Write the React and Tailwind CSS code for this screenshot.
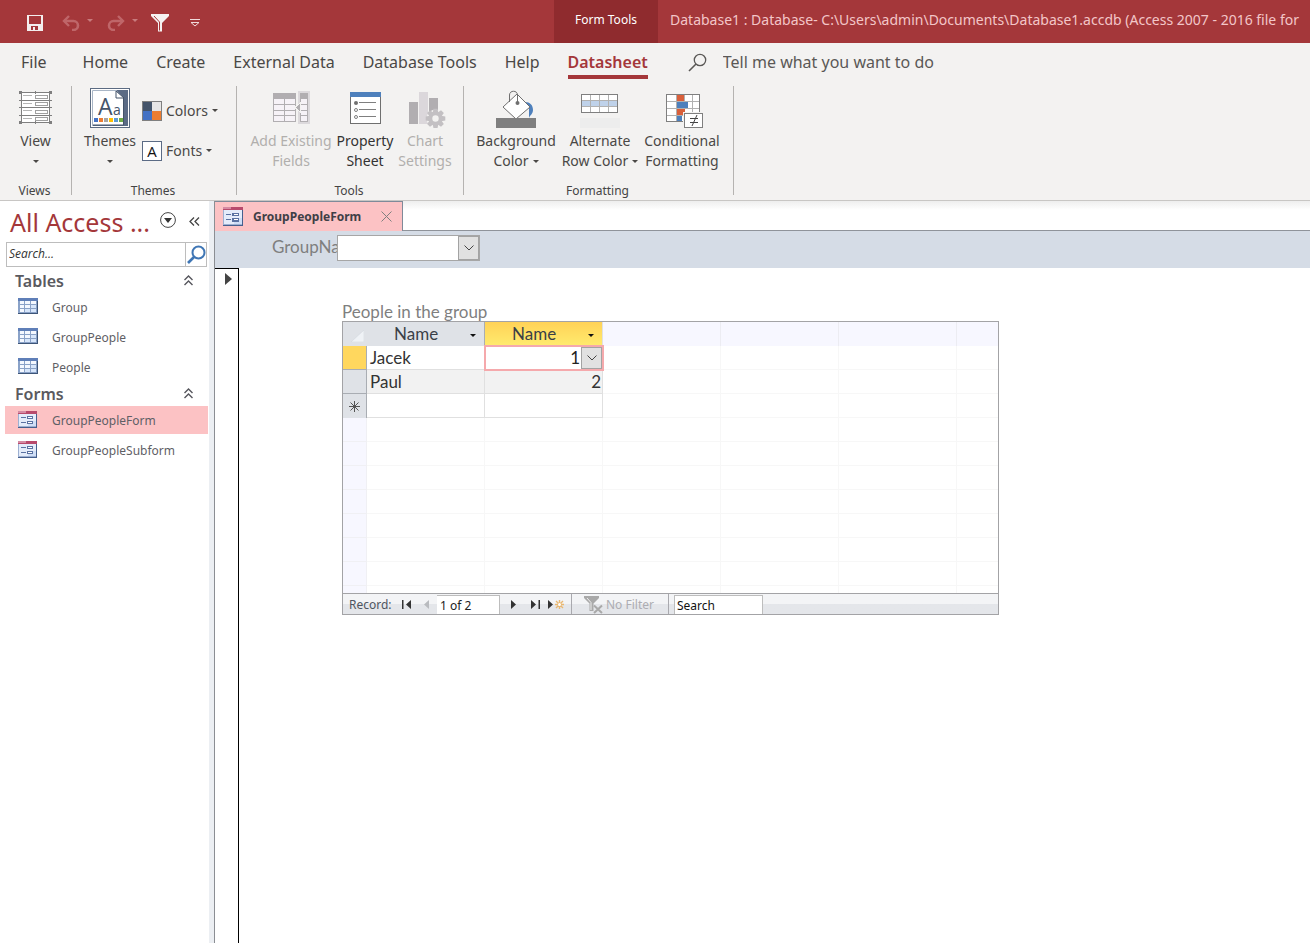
import React, { useState } from "react";

function Caret({ className = "" }) {
  return (
    <svg className={"inline-block shrink-0 " + className} width="6" height="3" viewBox="0 0 6 3" aria-hidden="true">
      <path d="M0 0h6L3 3z" fill="currentColor" />
    </svg>
  );
}

function SaveIcon() {
  return (
    <svg width="16" height="16" viewBox="0 0 16 16" shapeRendering="crispEdges" aria-hidden="true">
      <path fill="#f3eeee" fillRule="evenodd" d="M0 0h16v16H0zM2 1v8h12V1zM4 11v4h2v-3h2v3h3v-4z" />
    </svg>
  );
}

function UndoIcon({ flip = false }) {
  return (
    <svg className={flip ? "-scale-x-100" : ""} width="18" height="16" viewBox="0 0 18 16" fill="none" stroke="#bf6669" aria-hidden="true">
      <path d="M2 6h9.500a4.500 4.500 0 0 1 0 9h-1.500" strokeWidth="2.600" />
      <path d="M7 1 2 6l5 5" strokeWidth="2.400" />
    </svg>
  );
}

function FunnelIcon() {
  return (
    <svg width="18" height="18" viewBox="0 0 18 18" aria-hidden="true">
      <path d="M0 0h18v2l-7 7v8.500H7V9L0 2z" fill="#f6f1f1" />
      <path d="M3 2l5.500 6v8.500" fill="none" stroke="#a4373a" strokeWidth="1" />
    </svg>
  );
}

function CustomizeIcon() {
  return (
    <svg width="10" height="8" viewBox="0 0 10 8" fill="none" stroke="#f0dada" aria-hidden="true">
      <path d="M0 .5h10M1 3.500h8L5 7z" />
    </svg>
  );
}

function SearchGlyph() {
  return (
    <svg width="19" height="19" viewBox="0 0 19 19" fill="none" stroke="#5a5856" strokeWidth="1.300" aria-hidden="true">
      <circle cx="12" cy="7" r="5.700" />
      <path d="M8 11 1 18" strokeWidth="1.600" />
    </svg>
  );
}

function ViewIcon() {
  return (
    <svg width="33" height="34" viewBox="0 0 33 34" shapeRendering="crispEdges" aria-hidden="true">
      <rect x="2.500" y="1.500" width="28" height="30" fill="#fff" stroke="#7f7f7f" />
      <path d="M0 9.500h33M0 16.500h33M0 24.500h33M16.500 0v3M16.500 30v3" stroke="#7f7f7f" />
      <path d="M4 4.500h9M4 12.500h9M4 19.500h9M4 27.500h9" stroke="#b5b5b5" />
      <path d="M16.500 4.500h12v3h-12zM16.500 11.500h12v3h-12zM16.500 19.500h12v3h-12zM16.500 26.500h12v3h-12z" fill="#fff" stroke="#a0a0a0" />
      <path d="M0 0h3v3H0zM30 0h3v3h-3zM0 30h3v3H0zM30 30h3v3h-3z" fill="#7f7f7f" />
    </svg>
  );
}

function ThemesIcon() {
  return (
    <svg width="40" height="40" viewBox="0 0 40 40" aria-hidden="true">
      <rect x=".5" y=".5" width="39" height="39" fill="#fff" stroke="#5b6b82" />
      <path d="M26 2h12v36H2v-1h31V10z" fill="#5b6b85" />
      <path d="M2.500 38V2.500H26" fill="none" stroke="#a9b6c6" />
      <path d="M26 3l8 7h-8z" fill="#fff" stroke="#44546a" />
      <path d="M33.500 10v27H3" fill="none" stroke="#44546a" />
      <text x="8" y="27" fontSize="23" fill="#44546a" fontFamily="Open Sans, sans-serif">A</text>
      <text x="23" y="27" fontSize="14" fill="#44546a" fontFamily="Open Sans, sans-serif">a</text>
      <g shapeRendering="crispEdges">
        <rect x="4" y="30" width="4" height="4" fill="#4472c4" />
        <rect x="9" y="30" width="4" height="4" fill="#ed7d31" />
        <rect x="14" y="30" width="4" height="4" fill="#a5a5a5" />
        <rect x="19" y="30" width="4" height="4" fill="#ffc000" />
        <rect x="24" y="30" width="4" height="4" fill="#5b9bd5" />
        <rect x="29" y="30" width="4" height="4" fill="#70ad47" />
      </g>
    </svg>
  );
}

function ColorsIcon() {
  return (
    <svg width="20" height="20" viewBox="0 0 20 20" shapeRendering="crispEdges" aria-hidden="true">
      <path fill="#7f7f7f" d="M0 0h20v20H0z" />
      <path fill="#44546a" d="M1 1h9v9H1z" />
      <path fill="#e7e6e6" d="M10 1h9v9h-9z" />
      <path fill="#4472c4" d="M1 10h9v9H1z" />
      <path fill="#ed7d31" d="M10 10h9v9h-9z" />
    </svg>
  );
}

function FontsIcon() {
  return (
    <svg width="20" height="20" viewBox="0 0 20 20" aria-hidden="true">
      <rect x=".5" y=".5" width="19" height="19" fill="#fff" stroke="#5b6b85" />
      <text x="10" y="16" textAnchor="middle" fontSize="15" fill="#111" fontFamily="Open Sans, sans-serif">A</text>
    </svg>
  );
}

function AddFieldsIcon() {
  return (
    <svg width="37" height="34" viewBox="0 0 37 34" shapeRendering="crispEdges" aria-hidden="true">
      <path d="M0 2h23v29H0z" fill="#b1aeb1" />
      <path d="M1 8h10v5H1zM12 8h10v5H12zM1 14h10v5H1zM12 14h10v5H12zM1 20h10v4H1zM12 20h10v4H12zM1 25h10v5H1zM12 25h10v5H12z" fill="#f6f2f7" />
      <path d="M25 0h12v33H25z" fill="#dcd9dc" />
      <path d="M27 2h8v29h-8z" fill="#b1aeb1" />
      <path d="M28 8h6v5h-6zM28 14h6v5h-6zM28 20h6v4h-6zM28 25h6v5h-6z" fill="#f6f2f7" />
      <path d="M27 12v9l-5-4.500z" fill="#b1aeb1" stroke="#f3f2f1" />
    </svg>
  );
}

function PropertyIcon() {
  return (
    <svg width="31" height="32" viewBox="0 0 31 32" aria-hidden="true">
      <rect x=".5" y=".5" width="30" height="31" fill="#fff" stroke="#6f6f6f" />
      <path d="M0 0h31v5H0z" fill="#4e80bc" />
      <path d="M9 10.500h17M9 17.500h17M9 24.500h17" stroke="#7f7f7f" />
      <circle cx="6" cy="11" r="2" fill="#6f6f6f" />
      <circle cx="6" cy="18" r="1.500" fill="#fff" stroke="#7f7f7f" />
      <circle cx="6" cy="25" r="1.500" fill="#fff" stroke="#7f7f7f" />
    </svg>
  );
}

function ChartIcon() {
  const teeth = [0, 45, 90, 135, 180, 225, 270, 315];
  return (
    <svg className="ml-1" width="37" height="37" viewBox="0 0 37 37" aria-hidden="true">
      <path d="M0 11h9v22H0zM20 7h9v26h-9z" fill="#b1aeb1" />
      <path d="M10 1h9v32h-9z" fill="#dbd7db" />
      <g transform="translate(26.500 27.500)">
        <circle r="9" fill="#f3f2f1" />
        <g fill="#c3c0c3">
          {teeth.map((angle) => (
            <path key={angle} d="M-2.800-5.500-2-9.800h4l.8 4.300z" transform={`rotate(${angle})`} />
          ))}
          <circle r="7" />
        </g>
        <circle r="3.200" fill="#f3f2f1" />
      </g>
    </svg>
  );
}

function BucketIcon() {
  return (
    <svg width="40" height="38" viewBox="0 0 40 38" aria-hidden="true">
      <path d="M29 12c5 0 8 3 8 8 0 4-3 5-4 8V17z" fill="#4e80bc" />
      <path d="M7 17 21 4l13 13-14 12z" fill="#fff" stroke="#6f6f6f" />
      <path d="M13.500 12V5c0-5 8-5 8 0v8" fill="none" stroke="#6f6f6f" />
      <circle cx="21.500" cy="13" r="2" fill="#6f6f6f" />
      <path d="M0 28h40v10H0z" fill="#7f7f7f" />
    </svg>
  );
}

function AltRowIcon() {
  return (
    <svg width="40" height="34" viewBox="0 0 40 34" shapeRendering="crispEdges" aria-hidden="true">
      <path d="M1.500.5h36v18h-36z" fill="#fff" />
      <path d="M2 7h35v5H2z" fill="#bfd2ea" />
      <path d="M2 6.500h35M2 12.500h35M10.500 1v17M19.500 1v17M28.500 1v17" stroke="#b1b1b1" />
      <path d="M1.500.5h36v18h-36z" fill="none" stroke="#7f7f7f" />
      <path d="M0 24h40v10H0z" fill="#ededed" />
    </svg>
  );
}

function ConditionalIcon() {
  return (
    <svg className="ml-1" width="37" height="34" viewBox="0 0 37 34" aria-hidden="true">
      <g shapeRendering="crispEdges">
        <path d="M.5.5h33v27H.5z" fill="#fff" stroke="#7f7f7f" />
        <path d="M1 7.500h32M1 14.500h32M1 21.500h32M10.500 1v26M18.500 1v26M26.500 1v26" stroke="#b1b1b1" />
        <path d="M11 1h7v6h-7zM11 15h8v6h-8z" fill="#d9603b" />
        <path d="M11 8h11v6H11zM11 22h5v5h-5z" fill="#4e80bc" />
        <path d="M17 18h20v16H17z" fill="#f3f2f1" />
        <path d="M18.500 19.500h18v14h-18z" fill="#fff" stroke="#7f7f7f" />
      </g>
      <path d="M24 24.500h8M24 28.500h8M31 21l-5 11" stroke="#444" fill="none" />
    </svg>
  );
}

function TableIcon() {
  return (
    <svg width="20" height="16" viewBox="0 0 20 16" shapeRendering="crispEdges" aria-hidden="true">
      <path d="M0 0h20v16H0z" fill="#8aa2c8" />
      <path d="M0 15h20v1H0zM19 2h1v14h-1z" fill="#3d5578" />
      <path d="M0 0h20v3H0z" fill="#5f7fb8" />
      <path d="M2 3h4v3H2zM7 3h5v3H7zM13 3h5v3h-5zM2 7h4v3H2zM7 7h5v3H7zM13 7h5v3h-5zM2 11h4v3H2zM7 11h5v3H7zM13 11h5v3h-5z" fill="#f4f8ff" />
      <path d="M13 7h5v3h-5zM7 11h5v3H7zM13 11h5v3h-5z" fill="#d7e6fb" />
    </svg>
  );
}

function FormIcon({ large = false }) {
  return (
    <svg width={large ? 20 : 19} height={large ? 19 : 17} viewBox="0 0 19 17" preserveAspectRatio="none" shapeRendering="crispEdges" aria-hidden="true">
      <path d="M0 0h19v17H0z" fill="#9db0d2" />
      <path d="M1 3h17v12H1z" fill="#e4ecfa" />
      <path d="M10 10h8v5h-8z" fill="#cfdef6" />
      <path d="M0 0h19v3H0z" fill="#b84a6c" />
      <path d="M0 0h8v2H0z" fill="#d58ba3" />
      <path d="M0 16h19v1H0zM18 3h1v14h-1z" fill="#46608e" />
      <path d="M3 6.500h5M3 11.500h5" stroke="#5a72a2" />
      <path d="M9.500 5.500h5v2h-5zM9.500 10.500h5v2h-5z" fill="#fff" stroke="#5a72a2" />
    </svg>
  );
}

function DoubleUp() {
  return (
    <svg width="9" height="11" viewBox="0 0 9 11" fill="none" stroke="#55555c" strokeWidth="1.400" aria-hidden="true">
      <path d="M.5 5 4.500 1l4 4M.5 10l4-4 4 4" />
    </svg>
  );
}

function Chevron() {
  return (
    <svg width="10" height="6" viewBox="0 0 10 6" fill="none" stroke="#444" aria-hidden="true">
      <path d="M.5.5 5 5 9.500.5" />
    </svg>
  );
}

function BigButton({ icon, lines, width, caret, disabled, dark, low }) {
  return (
    <button
      type="button"
      disabled={disabled}
      className={
        "flex shrink-0 flex-col items-center whitespace-nowrap text-sm leading-5 " +
        width +
        (disabled ? " text-[#b1afad]" : dark ? " text-[#333]" : " text-[#4a4846]")
      }
    >
      <span className={"mb-[3px] flex h-10 justify-center " + (low ? "items-end" : "items-center")}>{icon}</span>
      <span>{lines[0]}</span>
      <span className="flex h-5 items-center gap-1">
        {lines[1]}
        {caret && <Caret />}
      </span>
    </button>
  );
}

function RibbonGroup({ label, width, pad, children }) {
  return (
    <section aria-label={label} className={"flex shrink-0 flex-col pt-2 " + width}>
      <div className={"flex " + pad}>{children}</div>
      <h2 className="mt-2.5 pr-0.5 text-center text-xs leading-5 text-[#444]">{label}</h2>
    </section>
  );
}

function Separator() {
  return <div className="mt-1.5 mb-[5px] w-px shrink-0 bg-[#b5b3b1]" />;
}

function TitleBar() {
  return (
    <header className="flex h-[43px] overflow-hidden bg-[#a4373a]">
      <div className="flex w-[554px] shrink-0 items-center pt-0.5 pl-[27px] text-[#c87b7d]">
        <button type="button" aria-label="Save"><SaveIcon /></button>
        <button type="button" aria-label="Undo" disabled className="ml-[19px] flex items-center gap-[7px]">
          <UndoIcon />
          <Caret className="mb-1" />
        </button>
        <button type="button" aria-label="Redo" disabled className="ml-3.5 flex items-center gap-[7px]">
          <UndoIcon flip />
          <Caret className="mb-1" />
        </button>
        <button type="button" aria-label="Filter" className="ml-[13px]"><FunnelIcon /></button>
        <button type="button" aria-label="Customize toolbar" className="ml-[21px]"><CustomizeIcon /></button>
      </div>
      <div className="flex w-[104px] shrink-0 items-center justify-center bg-[#8f2b2e] pb-1 text-xs text-white">Form Tools</div>
      <h1 className="flex-1 pt-2.5 pl-3 text-sm leading-5 whitespace-nowrap text-[#f3c6c8]">
        Database1 : Database- C:\Users\admin\Documents\Database1.accdb (Access 2007 - 2016 file for
      </h1>
    </header>
  );
}

const TABS = ["Home", "Create", "External Data", "Database Tools", "Help", "Datasheet"];

function MenuBar() {
  return (
    <nav className="flex h-[37px] items-start gap-7 pt-2 pl-[21px] text-base leading-[22px] whitespace-nowrap text-[#4a4846]">
      <button type="button" className="mr-2">File</button>
      {TABS.map((tab) => (
        <button
          key={tab}
          type="button"
          className={tab === "Datasheet" ? "border-b-4 border-[#a4373a] pb-0.5 font-semibold text-[#a4373a]" : ""}
        >
          {tab}
        </button>
      ))}
      <label className="ml-3 flex flex-1 items-center gap-4">
        <SearchGlyph />
        <input
          aria-label="Tell me what you want to do"
          placeholder="Tell me what you want to do"
          className="w-64 bg-transparent outline-none placeholder:text-[#5a5856] placeholder:opacity-100"
        />
      </label>
    </nav>
  );
}

function Ribbon() {
  return (
    <div className="flex h-[121px] overflow-hidden border-b border-[#c8c6c4]">
      <RibbonGroup label="Views" width="w-[71px]" pad="">
        <BigButton icon={<ViewIcon />} lines={["View", ""]} width="w-[71px]" caret />
      </RibbonGroup>
      <Separator />
      <RibbonGroup label="Themes" width="w-[164px]" pad="pl-3">
        <BigButton icon={<ThemesIcon />} lines={["Themes", ""]} width="w-[52px]" caret />
        <div className="ml-1.5 flex flex-col gap-[19px] pt-3 text-sm leading-5 text-[#4a4846]">
          <button type="button" className="flex items-center gap-1"><ColorsIcon /><span className="pt-px">Colors</span><Caret /></button>
          <button type="button" className="flex items-center gap-1"><FontsIcon /><span className="pt-px">Fonts</span><Caret /></button>
        </div>
      </RibbonGroup>
      <Separator />
      <RibbonGroup label="Tools" width="w-[226px]" pad="pl-3">
        <BigButton icon={<AddFieldsIcon />} lines={["Add Existing", "Fields"]} width="w-[84px]" disabled />
        <BigButton icon={<PropertyIcon />} lines={["Property", "Sheet"]} width="w-16" dark />
        <BigButton icon={<ChartIcon />} lines={["Chart", "Settings"]} width="w-14" disabled low />
      </RibbonGroup>
      <Separator />
      <RibbonGroup label="Formatting" width="w-[269px]" pad="pl-2.5">
        <BigButton icon={<BucketIcon />} lines={["Background", "Color"]} width="w-[84px]" caret low />
        <BigButton icon={<AltRowIcon />} lines={["Alternate", "Row Color"]} width="w-[84px]" caret low />
        <BigButton icon={<ConditionalIcon />} lines={["Conditional", "Formatting"]} width="w-20" low />
      </RibbonGroup>
      <Separator />
    </div>
  );
}

function NavGroup({ title, items, icon, selected }) {
  return (
    <section>
      <h3 className="flex h-[25px] items-center justify-between pr-4 pl-[15px] text-base font-semibold text-[#5a5a60]">
        {title}
        <button type="button" aria-label={"Collapse " + title}><DoubleUp /></button>
      </h3>
      <ul className="flex flex-col gap-0.5">
        {items.map((item) => (
          <li key={item} className={"mr-px ml-[5px] " + (item === selected ? "bg-[#fcc2c4]" : "")}>
            <a href={"#" + item} className="flex h-7 items-start pt-[5px] pl-[13px] text-xs leading-5 text-[#5f5f66]">
              <span className="w-[34px]">{icon}</span>
              {item}
            </a>
          </li>
        ))}
      </ul>
    </section>
  );
}

function NavPane() {
  return (
    <aside className="flex w-[215px] shrink-0 border-r border-[#8b8e93] bg-white">
      <div className="flex-1">
        <div className="flex h-[41px] items-center pl-2.5">
          <h2 className="w-[150px] text-[25px] leading-10 whitespace-nowrap text-[#a4373a]">All Access ...</h2>
          <button type="button" aria-label="Pane options" className="pb-1">
            <svg width="16" height="16" viewBox="0 0 16 16" aria-hidden="true">
              <circle cx="8" cy="8" r="7.400" fill="#fff" stroke="#444" />
              <path d="M4 6h8l-4 5z" fill="#333" />
            </svg>
          </button>
          <button type="button" aria-label="Collapse pane" className="ml-[13px]">
            <svg width="11" height="9" viewBox="0 0 11 9" fill="none" stroke="#444" strokeWidth="1.300" aria-hidden="true">
              <path d="M5 .5 1 4.500l4 4M10 .5 6 4.500l4 4" />
            </svg>
          </button>
        </div>
        <div className="mr-0.5 ml-1.5 flex h-[25px] border border-[#bdbdbd] bg-white">
          <input aria-label="Search objects" placeholder="Search..." className="min-w-0 flex-1 pb-0.5 pl-0.5 font-['Open_Sans',sans-serif] text-xs italic outline-none placeholder:text-[#333] placeholder:opacity-100" />
          <button type="button" aria-label="Search" className="border-l border-[#bdbdbd] pl-px">
            <svg width="19" height="19" viewBox="0 0 19 19" fill="none" stroke="#3f76b5" aria-hidden="true">
              <circle cx="11.500" cy="7.500" r="6" strokeWidth="2" />
              <path d="M7 12 1 18" strokeWidth="2.600" />
            </svg>
          </button>
        </div>
        <div className="pt-px">
          <NavGroup title="Tables" items={["Group", "GroupPeople", "People"]} icon={<TableIcon />} />
          <NavGroup title="Forms" items={["GroupPeopleForm", "GroupPeopleSubform"]} icon={<FormIcon />} selected="GroupPeopleForm" />
        </div>
      </div>
      <div className="w-[5px] bg-[#eceff3]" />
    </aside>
  );
}

const EMPTY_ROWS = [0, 1, 2, 3, 4, 5, 6];
const FILLER_COLUMNS = [0, 1, 2, 3];

function Filler({ height = "h-6", border = "border-b" }) {
  return FILLER_COLUMNS.map((c) => (
    <td key={c} className={height + " border-[#f7f7f7] " + border + (c < 3 ? " border-r" : "")} />
  ));
}

function HeaderCell({ active }) {
  return (
    <th
      className={
        "h-6 border-r p-0 font-normal " +
        (active ? "border-[#e0e0e0] bg-linear-to-b from-[#ffd257] to-[#ffeb6e]" : "border-[#a9adb3] bg-[#dfe2e7]")
      }
    >
      <div className="flex items-center justify-between pr-2 pl-[27px] text-[#3a3f47]">
        Name
        <button type="button" aria-label="Sort and filter" className="flex pt-0.5 text-[#111]"><Caret /></button>
      </div>
    </th>
  );
}

function Datasheet() {
  const [choice, setChoice] = useState("1");
  return (
    <div className="border border-[#a3a3a6] bg-white">
      <div className="h-[271px] overflow-hidden">
        <table className="w-full table-fixed border-separate border-spacing-0 text-[17px] leading-[22px] text-[#333]">
          <colgroup>
            <col className="w-6" />
            <col className="w-[118px]" />
            <col className="w-[118px]" />
            <col className="w-[118px]" />
            <col className="w-[118px]" />
            <col className="w-[118px]" />
            <col />
          </colgroup>
          <thead>
            <tr>
              <td className="h-6 bg-[#dfe2e7] p-0">
                <svg className="mt-1 ml-2 block" width="13" height="12" viewBox="0 0 13 12" aria-hidden="true">
                  <path d="M13 0v12H0z" fill="#eff2f6" stroke="#cfd4da" strokeWidth=".5" />
                </svg>
              </td>
              <HeaderCell />
              <HeaderCell active />
              {FILLER_COLUMNS.map((c) => (
                <td key={c} className={"h-6 border-[#ececf2] bg-[#f7f7ff] p-0 " + (c < 3 ? "border-r" : "")} />
              ))}
            </tr>
          </thead>
          <tbody>
            <tr>
              <td className="h-6 border-r border-b border-[#a9adb3] bg-[#ffd75e]" />
              <td className="h-6 border-b border-[#e0e0e0] p-0 pl-[3px]">Jacek</td>
              <td className="h-6 p-0">
                <div className="relative z-10 -mt-px -mr-px -mb-px -ml-px h-[26px] border-2 border-[#f5a9ac] bg-white">
                  <select
                    aria-label="Name"
                    value={choice}
                    onChange={(e) => setChoice(e.target.value)}
                    className="block h-full w-full appearance-none pr-[22px] text-right leading-[22px] text-[#222] outline-none"
                  >
                    <option>1</option>
                    <option>2</option>
                  </select>
                  <span className="pointer-events-none absolute top-0 right-0 flex h-[22px] w-[21px] items-center justify-center border border-[#a3a3a3] bg-[#e1e1e1]">
                    <Chevron />
                  </span>
                </div>
              </td>
              <Filler />
            </tr>
            <tr>
              <td className="h-6 border-r border-b border-[#a9adb3] bg-[#dfe2e7]" />
              <td className="h-6 border-r border-b border-[#e0e0e0] bg-[#f2f2f2] p-0 pl-[3px]">Paul</td>
              <td className="h-6 border-r border-b border-[#e0e0e0] bg-[#f2f2f2] p-0 pr-px text-right">2</td>
              <Filler />
            </tr>
            <tr>
              <td className="h-6 border-r border-[#a9adb3] bg-[#dfe2e7] p-0">
                <svg className="mx-auto block" width="11" height="11" viewBox="0 0 11 11" stroke="#555" aria-hidden="true">
                  <path d="M5.500 0v11M0 5.500h11M1.500 1.500l8 8M9.500 1.500l-8 8" />
                </svg>
              </td>
              <td className="h-6 border-r border-b border-[#e0e0e0]" />
              <td className="h-6 border-r border-b border-[#e0e0e0]" />
              <Filler />
            </tr>
            {EMPTY_ROWS.map((r) => (
              <tr key={r}>
                <td className="h-6 border-r border-b border-[#f0f0f4] bg-[#f7f7ff]" />
                <td className="h-6 border-r border-b border-[#f7f7f7]" />
                <td className="h-6 border-r border-b border-[#f7f7f7]" />
                <Filler />
              </tr>
            ))}
            <tr>
              <td className="h-[7px] border-r border-[#f0f0f4] bg-[#f7f7ff] p-0" />
              <td className="h-[7px] border-r border-[#f7f7f7] p-0" />
              <td className="h-[7px] border-r border-[#f7f7f7] p-0" />
              <Filler height="h-[7px] p-0" border="" />
            </tr>
          </tbody>
        </table>
      </div>
      <RecordBar />
    </div>
  );
}

function RecordBar() {
  return (
    <div className="flex h-[21px] items-stretch border-t border-[#a3a3a6] bg-linear-to-b from-[#f3f4f6] from-50% to-[#e4e6ea] to-50% font-['Noto_Sans',sans-serif] text-xs leading-5 text-[#4f5560]">
      <span className="w-[59px] shrink-0 pt-px pl-1.5">Record:</span>
      <button type="button" aria-label="First record" className="flex w-[22px] items-center">
        <svg width="9" height="9" viewBox="0 0 9 9" aria-hidden="true"><path d="M0 0h1.500v9H0zM9 0v9L4 4.500z" fill="#333" /></svg>
      </button>
      <button type="button" aria-label="Previous record" disabled className="flex w-[13px] items-center">
        <svg width="5" height="9" viewBox="0 0 5 9" aria-hidden="true"><path d="M5 0v9L0 4.500z" fill="#b9bbbf" /></svg>
      </button>
      <input aria-label="Current record" defaultValue="1 of 2" className="mt-px w-[63px] border-t border-r border-[#bdbdbd] bg-white pt-0.5 pl-[3px] text-[#222] outline-none" />
      <button type="button" aria-label="Next record" className="flex w-[31px] items-center pl-[11px]">
        <svg width="5" height="9" viewBox="0 0 5 9" aria-hidden="true"><path d="M0 0v9l5-4.500z" fill="#333" /></svg>
      </button>
      <button type="button" aria-label="Last record" className="flex w-[17px] items-center">
        <svg width="9" height="9" viewBox="0 0 9 9" aria-hidden="true"><path d="M7.500 0H9v9H7.500zM0 0v9l5-4.500z" fill="#333" /></svg>
      </button>
      <button type="button" aria-label="New record" className="flex w-[23px] items-center gap-0.5">
        <svg width="5" height="9" viewBox="0 0 5 9" aria-hidden="true"><path d="M0 0v9l5-4.500z" fill="#333" /></svg>
        <svg width="9" height="9" viewBox="0 0 9 9" stroke="#e9b872" fill="#fff" aria-hidden="true">
          <path d="M4.500 0v9M0 4.500h9M1 1l7 7M8 1 1 8" strokeWidth="1.400" />
          <circle cx="4.500" cy="4.500" r="1.500" stroke="none" />
        </svg>
      </button>
      <button type="button" disabled className="flex w-[98px] items-center gap-[3px] border-x border-[#a9a9ae] pt-0.5 pl-3 whitespace-nowrap text-[#adadb2]">
        <svg className="shrink-0" width="19" height="18" viewBox="0 0 19 18" aria-hidden="true">
          <path d="M0 0h15v2L9.500 7.500V15h-4V7.500L0 2z" fill="#a9a9a9" />
          <path d="M3 2l4 4.500V14" fill="none" stroke="#eee" />
          <path d="M10 9.500l8 7.500M18 9.500 10 17" stroke="#a9a9a9" strokeWidth="2" />
        </svg>
        No Filter
      </button>
      <input aria-label="Search records" defaultValue="Search" className="mt-px ml-[5px] w-[89px] border-x border-t border-[#bdbdbd] bg-white pt-0.5 pl-0.5 text-[#111] outline-none" />
    </div>
  );
}

function FormView() {
  const [group, setGroup] = useState("");
  return (
    <main className="flex min-w-0 flex-1 flex-col bg-white">
      <div className="flex h-[30px] bg-linear-to-b from-[#eeeeee] via-white via-30% to-white">
        <div className="flex w-[188px] shrink-0 items-center border-t border-r border-[#7f8a99] bg-[#fcc2c4] pl-2">
          <FormIcon large />
          <span className="ml-2.5 flex-1 text-xs font-bold text-[#3f3f46]">GroupPeopleForm</span>
          <button type="button" aria-label="Close" className="mr-2.5">
            <svg width="11" height="11" viewBox="0 0 11 11" stroke="#808080" aria-hidden="true"><path d="M.5.5l10 10M10.500.5l-10 10" /></svg>
          </button>
        </div>
        <div className="flex-1 border-b border-[#8f939a]" />
      </div>
      <div className="flex h-[37px] items-start bg-[#d5dce6] pt-1 pl-[57px] font-[Lato,sans-serif]">
        <label htmlFor="group-name" className="w-[65px] text-[17px] leading-6 whitespace-nowrap text-[#7f7f7f]">GroupNa</label>
        <div className="relative h-[26px] w-[143px] border border-[#a6a6a6] bg-white">
          <select
            id="group-name"
            value={group}
            onChange={(e) => setGroup(e.target.value)}
            className="h-full w-full appearance-none pl-1 outline-none"
          >
            <option value=""></option>
            <option>Group 1</option>
          </select>
          <span className="pointer-events-none absolute top-0 right-0 flex h-6 w-[21px] items-center justify-center border border-[#a3a3a3] bg-[#e1e1e1]">
            <Chevron />
          </span>
        </div>
      </div>
      <div className="flex flex-1">
        <div className="w-6 shrink-0 border-t border-r border-black pt-1 pl-2.5">
          <svg width="7" height="12" viewBox="0 0 7 12" aria-hidden="true"><path d="M0 0v12l7-6z" fill="#444" /></svg>
        </div>
        <div className="ml-[103px] w-[657px] pt-[35px] font-[Lato,sans-serif]">
          <h2 className="text-[17px] leading-[18px] text-[#7f7f7f]">People in the group</h2>
          <Datasheet />
        </div>
      </div>
    </main>
  );
}

export default function App() {
  return (
    <div className="flex min-h-screen flex-col overflow-hidden bg-[#f3f2f1] font-['Noto_Sans',sans-serif]">
      <TitleBar />
      <MenuBar />
      <Ribbon />
      <div className="flex flex-1">
        <NavPane />
        <FormView />
      </div>
    </div>
  );
}
